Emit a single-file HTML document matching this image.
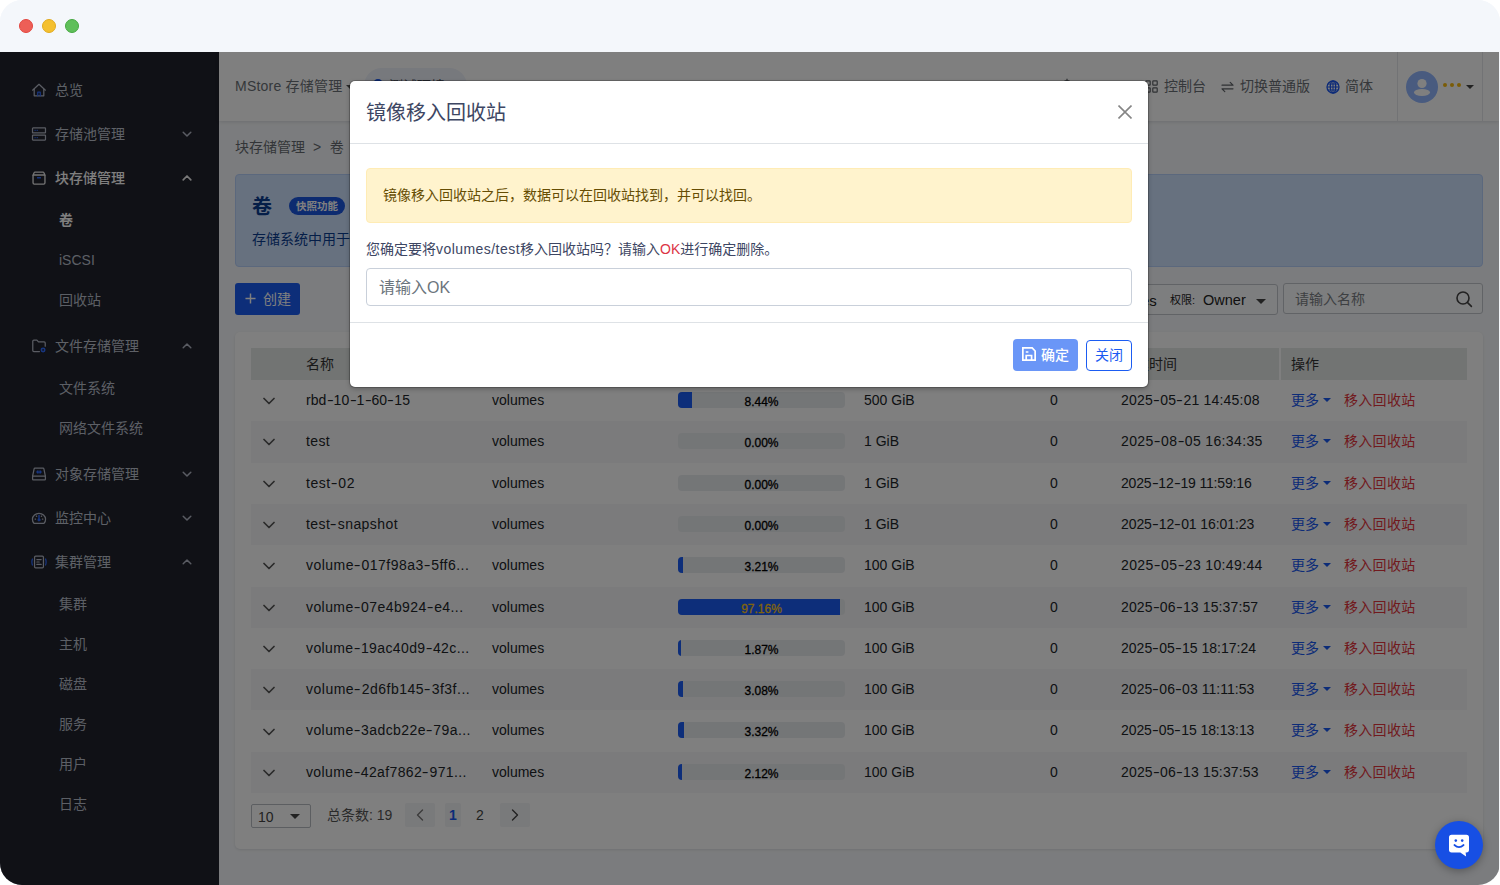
<!DOCTYPE html>
<html lang="zh-CN">
<head>
<meta charset="utf-8">
<title>MStore 存储管理</title>
<style>
*{box-sizing:border-box;margin:0;padding:0}
html,body{width:1500px;height:885px;overflow:hidden;background:#fff}
body{font-family:"Liberation Sans","Noto Sans CJK SC",sans-serif;font-size:14px;color:#212529;line-height:1.5}
.win{position:absolute;left:0;top:0;width:1500px;height:885px;border-radius:22px;overflow:hidden;background:#f4f7fb}
.tb{position:absolute;left:0;top:0;width:1500px;height:52px;background:#f4f7fb}
.tb i{position:absolute;top:19px;width:14px;height:14px;border-radius:50%}
.app{position:absolute;left:0;top:52px;width:1499px;height:833px;background:#f7f9fc;overflow:hidden}
/* sidebar */
.side{position:absolute;left:0;top:0;width:219px;height:833px;background:#20222c}
.mi{position:absolute;left:0;width:219px;height:44px;line-height:44px;color:#bdc3ce;font-size:14px}
.mi .t{position:absolute;left:55px;top:0}
.mi svg.ic{position:absolute;left:31px;top:14px;width:16px;height:16px}
.mi svg.ar{position:absolute;left:181px;top:16px;width:12px;height:12px}
.mi.on{color:#fff;font-weight:500}
.si{position:absolute;left:59px;height:40px;line-height:40px;color:#b9bfca;font-size:14px}
.si.on{color:#fff;font-weight:700}
/* main */
.hd{position:absolute;left:219px;top:0;width:1280px;height:69px;background:#fff;box-shadow:0 1px 4px rgba(0,0,0,.12)}
.abs{position:absolute;white-space:nowrap}
.ov{position:absolute;left:0;top:0;width:1499px;height:833px;background:rgba(0,0,0,.5)}
.htx{color:#6b7076;font-size:14px;line-height:21px}
.caret{position:absolute;width:0;height:0;border-style:solid;border-width:4px 4px 0;border-color:#555 transparent transparent}
.pill{position:absolute;left:145px;top:16px;width:103px;height:36px;border-radius:18px;background:#eef2fb;color:#4a5160;font-size:14px;line-height:36px}
.pill .dot{position:absolute;left:9px;top:11px;width:10px;height:10px;border-radius:50%;border:2px solid #1858f0}
.pill span{position:absolute;left:25px;top:0}
.vsep{position:absolute;top:0;width:1px;height:69px;background:#e4e6ea}
.ava{position:absolute;left:1187px;top:19px;width:32px;height:32px;border-radius:50%;background:#93b7ff;overflow:hidden}
.yd{position:absolute;top:31px;width:4px;height:4px;border-radius:50%;background:#f5b90f}
.info{position:absolute;left:235px;top:122px;width:1248px;height:93px;background:#cfe2ff;border:1px solid #b6d0fb;border-radius:4px;color:#0a3d91}
.bdg{position:absolute;left:53px;top:22px;width:56px;height:18px;border-radius:9px;background:#1a56e0;color:#fff;font-size:10.5px;font-weight:700;line-height:18px;text-align:center}
.btnc{position:absolute;left:235px;top:231px;width:65px;height:32px;border-radius:3px;background:#1b5cf2;color:#fff;font-size:14px;line-height:32px}
.sel{position:absolute;left:1038px;top:232px;width:240px;height:31px;border:1px solid #c2c7cd;border-radius:3px;line-height:31px;color:#222;background:#fbfcfe}
.srch{position:absolute;left:1283px;top:231px;width:200px;height:31px;border:1px solid #c2c7cd;border-radius:3px;line-height:30px;background:#fbfcfe}
.card{position:absolute;left:235px;top:280px;width:1248px;height:517px;background:#fff;border-radius:5px;box-shadow:0 1px 3px rgba(0,0,0,.1)}
.th{position:absolute;left:16px;top:16px;width:1216px;height:32px;background:#e5e8e6;line-height:32px;color:#333;font-size:14px}
.tr{position:absolute;left:16px;width:1216px;height:41.3px;line-height:41.7px;font-size:14px;color:#212529}
.tr.alt{background:#f7f7f8}
.chv{position:absolute;left:12px;top:17.200px;width:12px;height:8px}
.c1{left:55px}.c2{left:241px}.c4{left:613px}.c5{left:799px}.c6{left:870px}.c7{left:1040px;color:#1858f0}.c8{left:1093px;color:#e3343c;letter-spacing:.3px}
.pb{position:absolute;left:427px;top:12px;width:167px;height:16px;border-radius:4px;background:#e9ecef;overflow:hidden}
.pb i{position:absolute;left:0;top:0;height:16px;background:#1a5cf5}
.pb b{position:absolute;left:0;top:2px;width:167px;text-align:center;font-size:12px;line-height:16px;font-weight:400;color:#000;-webkit-text-stroke:.3px}
.pgsel{position:absolute;left:16px;top:472px;width:60px;height:24px;border:1px solid #b8bcc2;border-radius:2px;line-height:24px;font-size:14px;color:#444}
.pgb{position:absolute;top:471px;width:30px;height:24px;background:#f3f4f6;line-height:24px;text-align:center;font-size:14px;border-radius:2px}
.pgb svg{position:relative;top:1px}
/* modal */
.modal{position:absolute;left:350px;top:29px;width:798px;height:306px;background:#fff;border-radius:5px;box-shadow:0 0 0 1px rgba(0,0,0,.2),0 2px 5px rgba(0,0,0,.25)}
.mt{position:absolute;left:16px;top:17px;font-size:20px;line-height:30px;color:#3d4663}
.mx{position:absolute;left:768px;top:24px;width:14px;height:14px}
.hr{position:absolute;left:0;width:798px;height:1px;background:#dee2e6}
.warn{position:absolute;left:16px;top:87px;width:766px;height:55px;background:#fff3cd;border:1px solid #ffecb5;border-radius:4px;color:#664d03;font-size:14px;line-height:53px;padding-left:16px}
.q{position:absolute;left:16px;top:158px;font-size:14px;line-height:21px;color:#3d4663}
.inp{position:absolute;left:16px;top:187px;width:766px;height:38px;border:1px solid #c9d0da;border-radius:4px;font-size:16px;line-height:37px;padding-left:12px;color:#6c757d}
.ok{position:absolute;left:663px;top:258px;width:65px;height:32px;border-radius:4px;background:#6a96f7;color:#fff;font-size:14px;line-height:32px}
.cl{position:absolute;left:736px;top:259px;width:46px;height:31px;border-radius:4px;border:1px solid #1b5cf2;color:#1b5cf2;font-size:14px;line-height:29px;text-align:center}
.chat{position:absolute;left:1435px;top:769px;width:48px;height:48px;border-radius:50%;background:#174fe4;box-shadow:0 2px 8px rgba(0,0,0,.3)}
.h{display:inline-block;font-style:normal;transform:scaleX(1.45);margin:0 1.2px}
</style>
</head>
<body>
<div class="win">
<div class="tb"><i style="left:19px;background:#ed5f57;border:1px solid #e2463f"></i><i style="left:42px;background:#f4c02f;border:1px solid #e0aa1f"></i><i style="left:65px;background:#5fbf5a;border:1px solid #46a842"></i></div>
<div class="app">
<div class="side">
<div class="mi" style="top:16px"><svg class="ic" viewBox="0 0 18 18" fill="none" stroke="#b4b9c6" stroke-width="1.4" stroke-linejoin="round" stroke-linecap="round"><path d="M1.8 9.2 9 2.6l7.2 6.6"/><path d="M3.6 8v7.6h10.800V8"/><path d="M7.600 15.600v-4.100h2.800v4.100" stroke="#2f6bff"/></svg><span class="t">总览</span></div>
<div class="mi" style="top:60px"><svg class="ic" viewBox="0 0 18 18" fill="none" stroke="#b4b9c6" stroke-width="1.4" stroke-linejoin="round"><rect x="1.700" y="2.200" width="14.600" height="5.600" rx=".6"/><rect x="1.700" y="10.200" width="14.600" height="5.600" rx=".6"/><path d="M4 5h1.200M6.400 5h1.200M4 13h1.200M6.400 13h1.200" stroke="#2f6bff"/></svg><span class="t">存储池管理</span><svg class="ar" viewBox="0 0 12 12" fill="none" stroke="#b4b9c6" stroke-width="1.500" stroke-linecap="round" stroke-linejoin="round"><path d="M2.200 4.200 6 8l3.800-3.800"/></svg></div>
<div class="mi on" style="top:104px"><svg class="ic" viewBox="0 0 18 18" fill="none" stroke="#e8e8e8" stroke-width="1.500" stroke-linejoin="round"><path d="M2.300 5.600V14.400a1.400 1.400 0 0 0 1.400 1.400h10.600a1.400 1.400 0 0 0 1.400-1.400V5.600"/><path d="M2.300 5.600 3.600 2.900a1 1 0 0 1 .9-.6h9a1 1 0 0 1 .9.600l1.300 2.700z"/><path d="M6.800 8.700h4.400" stroke="#2f6bff" stroke-width="1.600"/></svg><span class="t">块存储管理</span><svg class="ar" viewBox="0 0 12 12" fill="none" stroke="#f0f0f0" stroke-width="1.700" stroke-linecap="round" stroke-linejoin="round"><path d="M2.200 7.800 6 4l3.800 3.800"/></svg></div>
<div class="si on" style="top:148px">卷</div>
<div class="si" style="top:188px">iSCSI</div>
<div class="si" style="top:228px">回收站</div>
<div class="mi" style="top:272px"><svg class="ic" viewBox="0 0 18 18" fill="none" stroke="#b4b9c6" stroke-width="1.400" stroke-linejoin="round" stroke-linecap="round"><path d="M9.500 15.300H3.200a1.200 1.200 0 0 1-1.200-1.200V3.600a1.200 1.200 0 0 1 1.200-1.200h3.400l1.800 2h6.400a1.200 1.200 0 0 1 1.200 1.200v3.600"/><circle cx="13.600" cy="13.400" r="1.900" stroke="#2f6bff" stroke-width="1.800"/></svg><span class="t">文件存储管理</span><svg class="ar" viewBox="0 0 12 12" fill="none" stroke="#b4b9c6" stroke-width="1.500" stroke-linecap="round" stroke-linejoin="round"><path d="M2.200 7.800 6 4l3.800 3.800"/></svg></div>
<div class="si" style="top:316px">文件系统</div>
<div class="si" style="top:356px">网络文件系统</div>
<div class="mi" style="top:400px"><svg class="ic" viewBox="0 0 18 18" fill="none" stroke="#b4b9c6" stroke-width="1.400" stroke-linejoin="round" stroke-linecap="round"><path d="M1.800 11.400 3.500 3.300a1 1 0 0 1 1-.8h9a1 1 0 0 1 1 .8l1.700 8.100"/><rect x="1.800" y="11.400" width="14.400" height="4.200" rx=".8"/><path d="M6.600 6.800h4.800M6.600 6.800l1.200-1.200M6.600 6.800l1.200 1.200M11.400 6.800l-1.200-1.200M11.400 6.800l-1.200 1.200" stroke="#2f6bff"/></svg><span class="t">对象存储管理</span><svg class="ar" viewBox="0 0 12 12" fill="none" stroke="#b4b9c6" stroke-width="1.500" stroke-linecap="round" stroke-linejoin="round"><path d="M2.200 4.200 6 8l3.800-3.800"/></svg></div>
<div class="mi" style="top:444px"><svg class="ic" viewBox="0 0 18 18" fill="none" stroke="#b4b9c6" stroke-width="1.400" stroke-linejoin="round" stroke-linecap="round"><path d="M3.400 15h11.200a7.400 6.800 0 1 0-11.200 0z"/><path d="M4.600 10.200h.6M12.800 10.200h.6M6 6.800l.4.400M12 6.800l-.4.400"/><path d="M9 6.200v4" stroke="#2f6bff" stroke-width="1.600"/><circle cx="9" cy="11.200" r="1.300" fill="#2f6bff" stroke="#2f6bff" stroke-width=".8"/></svg><span class="t">监控中心</span><svg class="ar" viewBox="0 0 12 12" fill="none" stroke="#b4b9c6" stroke-width="1.500" stroke-linecap="round" stroke-linejoin="round"><path d="M2.200 4.200 6 8l3.800-3.800"/></svg></div>
<div class="mi" style="top:488px"><svg class="ic" viewBox="0 0 18 18" fill="none" stroke="#b4b9c6" stroke-width="1.400" stroke-linejoin="round" stroke-linecap="round"><rect x="4" y="2.400" width="10" height="13.200" rx="1.200"/><path d="M6.600 6.200h4.800M6.600 9h2.600M6.600 11.800h4.800"/><path d="M1.600 5.600q-1.200 3.400 0 6.800M16.400 5.600q1.200 3.400 0 6.800" stroke="#2f6bff"/></svg><span class="t">集群管理</span><svg class="ar" viewBox="0 0 12 12" fill="none" stroke="#b4b9c6" stroke-width="1.500" stroke-linecap="round" stroke-linejoin="round"><path d="M2.200 7.800 6 4l3.800 3.800"/></svg></div>
<div class="si" style="top:532px">集群</div>
<div class="si" style="top:572px">主机</div>
<div class="si" style="top:612px">磁盘</div>
<div class="si" style="top:652px">服务</div>
<div class="si" style="top:692px">用户</div>
<div class="si" style="top:732px">日志</div>
</div>

<div class="hd">
<span class="abs htx" style="left:16px;top:24px;letter-spacing:.22px">MStore 存储管理</span><i class="caret" style="left:127px;top:33px"></i>
<div class="pill"><i class="dot"></i><span>测试环境</span></div>
<svg class="abs" style="left:841px;top:26px;width:14px;height:16px" viewBox="0 0 14 16" fill="none" stroke="#5f6368" stroke-width="1.300"><path d="M7 .8v1.800M7 2.600a4.200 4.200 0 0 0-4.200 4.200v3L1.400 12.600h11.200l-1.400-2.800v-3A4.200 4.200 0 0 0 7 2.600zM5.400 14.600h3.200"/></svg>
<svg class="abs" style="left:926px;top:28px;width:13px;height:13px" viewBox="0 0 13 13" fill="none" stroke="#5f6368" stroke-width="1.200"><rect x=".8" y=".8" width="4.400" height="4.400" rx=".6"/><rect x="7.800" y=".8" width="4.400" height="4.400" rx=".6"/><rect x=".8" y="7.800" width="4.400" height="4.400" rx=".6"/><rect x="7.800" y="7.800" width="4.400" height="4.400" rx=".6"/></svg>
<span class="abs htx" style="left:945px;top:24px">控制台</span>
<svg class="abs" style="left:1002px;top:29px;width:13px;height:12px" viewBox="0 0 13 12" fill="none" stroke="#5f6368" stroke-width="1.200" stroke-linecap="round" stroke-linejoin="round"><path d="M1 4.200h11L9.200 1.400M12 7.800H1l2.800 2.800"/></svg>
<span class="abs htx" style="left:1021px;top:24px">切换普通版</span>
<svg class="abs" style="left:1107px;top:28px;width:14px;height:14px" viewBox="0 0 14 14" fill="none" stroke="#1a56f0" stroke-width="1.300"><circle cx="7" cy="7" r="6"/><ellipse cx="7" cy="7" rx="2.700" ry="6"/><path d="M1 7h12M7 1v12M1.900 4h10.200M1.900 10h10.200" stroke-width="1.100"/></svg>
<span class="abs htx" style="left:1126px;top:24px">简体</span>
<i class="vsep" style="left:1178px"></i><i class="vsep" style="left:1263px"></i>
<div class="ava"><svg viewBox="0 0 32 32" width="32" height="32"><circle cx="16" cy="12.500" r="4.600" fill="#fff"/><ellipse cx="16" cy="21.500" rx="8" ry="3.400" fill="#fff"/></svg></div>
<i class="yd" style="left:1224px"></i><i class="yd" style="left:1231px"></i><i class="yd" style="left:1238px"></i><i class="caret" style="left:1247px;top:33px;border-top-color:#444"></i>
</div>
<span class="abs" style="left:235px;top:85px;color:#666b70;font-size:14px">块存储管理<span style="margin:0 8.5px 0 8px">&gt;</span>卷</span>
<div class="info"><span class="abs" style="left:16px;top:17px;font-size:20px;font-weight:700;line-height:30px">卷</span><span class="bdg">快照功能</span><span class="abs" style="left:16px;top:54px;font-size:14px">存储系统中用于创建和管理块设备镜像的逻辑存储单元，支持快照、克隆与回收站等功能。</span></div>
<div class="btnc"><svg viewBox="0 0 12 12" width="11" height="11" style="position:absolute;left:10px;top:10px" stroke="#fff" stroke-width="1.600" fill="none"><path d="M6 .5v11M.5 6h11"/></svg><span style="position:absolute;left:28px;top:0">创建</span></div>
<div class="sel"><span class="abs" style="left:12px;top:0;font-size:12px;color:#333">存储池:</span><span class="abs" style="left:62px;top:0;font-size:15px">volumes</span><span class="abs" style="left:131px;top:0;font-size:11px;color:#222">权限:</span><span class="abs" style="left:164px;top:0;font-size:14.5px">Owner</span><i class="caret" style="left:217px;top:14px;border-width:5px 5px 0;border-top-color:#444"></i></div>
<div class="srch"><span class="abs" style="left:11px;top:0;color:#7a7f85">请输入名称</span><svg class="abs" style="left:171px;top:6px;width:18px;height:18px" viewBox="0 0 18 18" fill="none" stroke="#444" stroke-width="1.600" stroke-linecap="round"><circle cx="8" cy="8" r="6"/><path d="M12.600 12.600 16.400 16.400"/></svg></div>
<div class="card">
<div class="th"><span class="abs" style="left:55px">名称</span><span class="abs" style="left:241px">存储池</span><span class="abs" style="left:427px">使用率</span><span class="abs" style="left:613px">容量</span><span class="abs" style="left:778px">快照数</span><span class="abs" style="left:870px">创建时间</span><i style="position:absolute;left:1028px;top:0;width:2px;height:32px;background:#fff"></i><span class="abs" style="left:1040px">操作</span></div>
<div class="tr" style="top:48.00px"><svg class="chv" viewBox="0 0 12 8" fill="none" stroke="#555" stroke-width="1.700" stroke-linecap="round" stroke-linejoin="round"><path d="M1 1.500 6 6.500l5-5"/></svg><span class="abs c1" id="n0" style="letter-spacing:0.075px">rbd<i class="h">-</i>10<i class="h">-</i>1<i class="h">-</i>60<i class="h">-</i>15</span><span class="abs c2">volumes</span><div class="pb"><i style="width:14.1px"></i><b>8.44%</b></div><span class="abs c4">500 GiB</span><span class="abs c5">0</span><span class="abs c6" id="t0" style="letter-spacing:0.205px">2025<i class="h">-</i>05<i class="h">-</i>21 14:45:08</span><span class="abs c7">更多<i class="caret" style="position:relative;display:inline-block;left:4px;top:-3px;border-width:4px 4px 0;border-top-color:#1858f0"></i></span><span class="abs c8">移入回收站</span></div>
<div class="tr alt" style="top:89.30px"><svg class="chv" viewBox="0 0 12 8" fill="none" stroke="#555" stroke-width="1.700" stroke-linecap="round" stroke-linejoin="round"><path d="M1 1.500 6 6.500l5-5"/></svg><span class="abs c1" id="n1" style="letter-spacing:0.355px">test</span><span class="abs c2">volumes</span><div class="pb"><i style="width:0.0px"></i><b>0.00%</b></div><span class="abs c4">1 GiB</span><span class="abs c5">0</span><span class="abs c6" id="t1" style="letter-spacing:0.363px">2025<i class="h">-</i>08<i class="h">-</i>05 16:34:35</span><span class="abs c7">更多<i class="caret" style="position:relative;display:inline-block;left:4px;top:-3px;border-width:4px 4px 0;border-top-color:#1858f0"></i></span><span class="abs c8">移入回收站</span></div>
<div class="tr" style="top:130.60px"><svg class="chv" viewBox="0 0 12 8" fill="none" stroke="#555" stroke-width="1.700" stroke-linecap="round" stroke-linejoin="round"><path d="M1 1.500 6 6.500l5-5"/></svg><span class="abs c1" id="n2" style="letter-spacing:0.542px">test<i class="h">-</i>02</span><span class="abs c2">volumes</span><div class="pb"><i style="width:0.0px"></i><b>0.00%</b></div><span class="abs c4">1 GiB</span><span class="abs c5">0</span><span class="abs c6" id="t2" style="letter-spacing:-0.171px">2025<i class="h">-</i>12<i class="h">-</i>19 11:59:16</span><span class="abs c7">更多<i class="caret" style="position:relative;display:inline-block;left:4px;top:-3px;border-width:4px 4px 0;border-top-color:#1858f0"></i></span><span class="abs c8">移入回收站</span></div>
<div class="tr alt" style="top:171.90px"><svg class="chv" viewBox="0 0 12 8" fill="none" stroke="#555" stroke-width="1.700" stroke-linecap="round" stroke-linejoin="round"><path d="M1 1.500 6 6.500l5-5"/></svg><span class="abs c1" id="n3" style="letter-spacing:0.427px">test<i class="h">-</i>snapshot</span><span class="abs c2">volumes</span><div class="pb"><i style="width:0.0px"></i><b>0.00%</b></div><span class="abs c4">1 GiB</span><span class="abs c5">0</span><span class="abs c6" id="t3" style="letter-spacing:-0.084px">2025<i class="h">-</i>12<i class="h">-</i>01 16:01:23</span><span class="abs c7">更多<i class="caret" style="position:relative;display:inline-block;left:4px;top:-3px;border-width:4px 4px 0;border-top-color:#1858f0"></i></span><span class="abs c8">移入回收站</span></div>
<div class="tr" style="top:213.20px"><svg class="chv" viewBox="0 0 12 8" fill="none" stroke="#555" stroke-width="1.700" stroke-linecap="round" stroke-linejoin="round"><path d="M1 1.500 6 6.500l5-5"/></svg><span class="abs c1" id="n4" style="letter-spacing:0.473px">volume<i class="h">-</i>017f98a3<i class="h">-</i>5ff6...</span><span class="abs c2">volumes</span><div class="pb"><i style="width:5.4px"></i><b>3.21%</b></div><span class="abs c4">100 GiB</span><span class="abs c5">0</span><span class="abs c6" id="t4" style="letter-spacing:0.363px">2025<i class="h">-</i>05<i class="h">-</i>23 10:49:44</span><span class="abs c7">更多<i class="caret" style="position:relative;display:inline-block;left:4px;top:-3px;border-width:4px 4px 0;border-top-color:#1858f0"></i></span><span class="abs c8">移入回收站</span></div>
<div class="tr alt" style="top:254.50px"><svg class="chv" viewBox="0 0 12 8" fill="none" stroke="#555" stroke-width="1.700" stroke-linecap="round" stroke-linejoin="round"><path d="M1 1.500 6 6.500l5-5"/></svg><span class="abs c1" id="n5" style="letter-spacing:0.415px">volume<i class="h">-</i>07e4b924<i class="h">-</i>e4...</span><span class="abs c2">volumes</span><div class="pb"><i style="width:162.3px"></i><b style="color:#ffc814">97.16%</b></div><span class="abs c4">100 GiB</span><span class="abs c5">0</span><span class="abs c6" id="t5" style="letter-spacing:0.132px">2025<i class="h">-</i>06<i class="h">-</i>13 15:37:57</span><span class="abs c7">更多<i class="caret" style="position:relative;display:inline-block;left:4px;top:-3px;border-width:4px 4px 0;border-top-color:#1858f0"></i></span><span class="abs c8">移入回收站</span></div>
<div class="tr" style="top:295.80px"><svg class="chv" viewBox="0 0 12 8" fill="none" stroke="#555" stroke-width="1.700" stroke-linecap="round" stroke-linejoin="round"><path d="M1 1.500 6 6.500l5-5"/></svg><span class="abs c1" id="n6" style="letter-spacing:0.386px">volume<i class="h">-</i>19ac40d9<i class="h">-</i>42c...</span><span class="abs c2">volumes</span><div class="pb"><i style="width:3.1px"></i><b>1.87%</b></div><span class="abs c4">100 GiB</span><span class="abs c5">0</span><span class="abs c6" id="t6" style="letter-spacing:0.011px">2025<i class="h">-</i>05<i class="h">-</i>15 18:17:24</span><span class="abs c7">更多<i class="caret" style="position:relative;display:inline-block;left:4px;top:-3px;border-width:4px 4px 0;border-top-color:#1858f0"></i></span><span class="abs c8">移入回收站</span></div>
<div class="tr alt" style="top:337.10px"><svg class="chv" viewBox="0 0 12 8" fill="none" stroke="#555" stroke-width="1.700" stroke-linecap="round" stroke-linejoin="round"><path d="M1 1.500 6 6.500l5-5"/></svg><span class="abs c1" id="n7" style="letter-spacing:0.501px">volume<i class="h">-</i>2d6fb145<i class="h">-</i>3f3f...</span><span class="abs c2">volumes</span><div class="pb"><i style="width:5.1px"></i><b>3.08%</b></div><span class="abs c4">100 GiB</span><span class="abs c5">0</span><span class="abs c6" id="t7" style="letter-spacing:0.031px">2025<i class="h">-</i>06<i class="h">-</i>03 11:11:53</span><span class="abs c7">更多<i class="caret" style="position:relative;display:inline-block;left:4px;top:-3px;border-width:4px 4px 0;border-top-color:#1858f0"></i></span><span class="abs c8">移入回收站</span></div>
<div class="tr" style="top:378.40px"><svg class="chv" viewBox="0 0 12 8" fill="none" stroke="#555" stroke-width="1.700" stroke-linecap="round" stroke-linejoin="round"><path d="M1 1.500 6 6.500l5-5"/></svg><span class="abs c1" id="n8" style="letter-spacing:0.410px">volume<i class="h">-</i>3adcb22e<i class="h">-</i>79a...</span><span class="abs c2">volumes</span><div class="pb"><i style="width:5.5px"></i><b>3.32%</b></div><span class="abs c4">100 GiB</span><span class="abs c5">0</span><span class="abs c6" id="t8" style="letter-spacing:-0.079px">2025<i class="h">-</i>05<i class="h">-</i>15 18:13:13</span><span class="abs c7">更多<i class="caret" style="position:relative;display:inline-block;left:4px;top:-3px;border-width:4px 4px 0;border-top-color:#1858f0"></i></span><span class="abs c8">移入回收站</span></div>
<div class="tr alt" style="top:419.70px"><svg class="chv" viewBox="0 0 12 8" fill="none" stroke="#555" stroke-width="1.700" stroke-linecap="round" stroke-linejoin="round"><path d="M1 1.500 6 6.500l5-5"/></svg><span class="abs c1" id="n9" style="letter-spacing:0.369px">volume<i class="h">-</i>42af7862<i class="h">-</i>971...</span><span class="abs c2">volumes</span><div class="pb"><i style="width:3.5px"></i><b>2.12%</b></div><span class="abs c4">100 GiB</span><span class="abs c5">0</span><span class="abs c6" id="t9" style="letter-spacing:0.153px">2025<i class="h">-</i>06<i class="h">-</i>13 15:37:53</span><span class="abs c7">更多<i class="caret" style="position:relative;display:inline-block;left:4px;top:-3px;border-width:4px 4px 0;border-top-color:#1858f0"></i></span><span class="abs c8">移入回收站</span></div>
<div class="pgsel"><span class="abs" style="left:6px;top:0">10</span><i class="caret" style="left:38px;top:9px;border-width:5px 5px 0;border-top-color:#444"></i></div>
<span class="abs" style="left:92px;top:473px;color:#555">总条数: 19</span>
<div class="pgb" style="left:170px"><svg viewBox="0 0 8 12" width="8" height="12" fill="none" stroke="#777" stroke-width="1.400" stroke-linecap="round" stroke-linejoin="round"><path d="M6.500 1 1.500 6l5 5"/></svg></div>
<div class="pgb" style="left:210px;width:16px;color:#1858f0;font-weight:700">1</div>
<div class="pgb" style="left:237px;width:16px;background:none;color:#444">2</div>
<div class="pgb" style="left:265px"><svg viewBox="0 0 8 12" width="8" height="12" fill="none" stroke="#444" stroke-width="1.400" stroke-linecap="round" stroke-linejoin="round"><path d="M1.500 1 6.500 6l-5 5"/></svg></div>
</div>
<div class="ov"></div>
<div class="modal">
<div class="mt">镜像移入回收站</div>
<svg class="mx" viewBox="0 0 14 14" fill="none" stroke="#858585" stroke-width="1.600"><path d="M.5.5l13 13M13.500.5l-13 13"/></svg>
<div class="hr" style="top:62px"></div>
<div class="warn">镜像移入回收站之后，数据可以在回收站找到，并可以找回。</div>
<div class="q">您确定要将<span style="letter-spacing:.45px">volumes/test</span>移入回收站吗？请输入<span style="color:#dc3545">OK</span>进行确定删除。</div>
<div class="inp">请输入OK</div>
<div class="hr" style="top:241px"></div>
<div class="ok"><svg viewBox="0 0 14 14" width="14" height="14" style="position:absolute;left:9px;top:8px" fill="none" stroke="#fff" stroke-width="1.700" stroke-linejoin="miter"><path d="M.85.85h9.300L13.150 4v9.150H.85z"/><path d="M4.200 13V8.500h5.400V13M3.800 5h2.600"/></svg><span style="position:absolute;left:28px;top:0;font-weight:500">确定</span></div>
<div class="cl">关闭</div>
</div>
<div class="chat"><svg viewBox="0 0 24 24" width="24" height="24" style="position:absolute;left:12px;top:12px"><path d="M4.600 1.800h14.800A2.600 2.600 0 0 1 22 4.400v12.400a2.600 2.600 0 0 1-2.600 2.600H18.600l.5 4-5.800-4H4.600A2.600 2.600 0 0 1 2 16.800V4.400A2.600 2.600 0 0 1 4.600 1.800z" fill="#fff"/><circle cx="8.800" cy="7.600" r="1.300" fill="#174fe4"/><circle cx="15.200" cy="7.600" r="1.300" fill="#174fe4"/><path d="M7.400 12q4.600 4.200 9.200 0" stroke="#174fe4" stroke-width="1.700" fill="none" stroke-linecap="round"/></svg></div>

</div>
</div>
</body>
</html>
